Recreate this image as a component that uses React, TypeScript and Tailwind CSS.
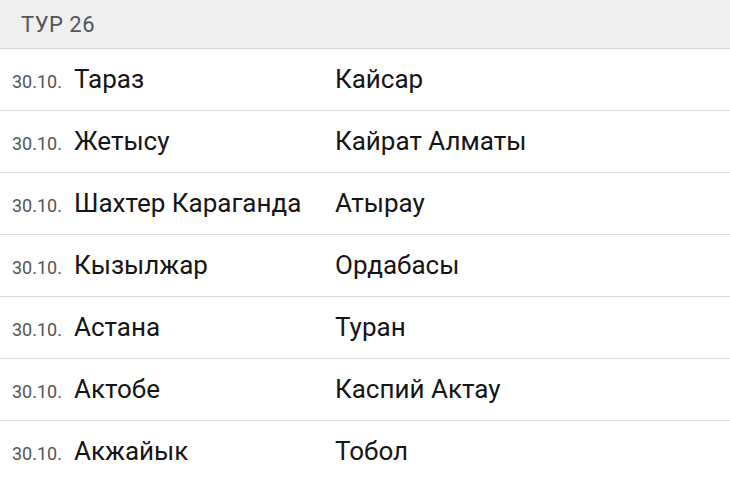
const MATCHES = [
  { date: "30.10.", home: "Тараз", away: "Кайсар" },
  { date: "30.10.", home: "Жетысу", away: "Кайрат Алматы" },
  { date: "30.10.", home: "Шахтер Караганда", away: "Атырау" },
  { date: "30.10.", home: "Кызылжар", away: "Ордабасы" },
  { date: "30.10.", home: "Астана", away: "Туран" },
  { date: "30.10.", home: "Актобе", away: "Каспий Актау" },
  { date: "30.10.", home: "Акжайык", away: "Тобол" },
];

export default function App() {
  return (
    <div className="w-[730px] h-[480px] overflow-hidden bg-white font-['Roboto',sans-serif]">
      <div className="h-[49px] bg-[#efefef] border-b border-[#d6d6d6] flex items-center pl-[21px]">
        <span className="text-[22px] text-[#555] tracking-[0.5px]">ТУР 26</span>
      </div>
      <ul>
        {MATCHES.map((m, i) => (
          <li
            key={i}
            className="h-[62px] border-b border-[#dcdcdc] flex items-center"
          >
            <span className="w-[74px] pl-[12px] text-[18px] text-[#555] pt-[3px]">{m.date}</span>
            <span className="w-[261px] text-[26px] text-[#151515]">{m.home}</span>
            <span className="text-[26px] text-[#151515]">{m.away}</span>
          </li>
        ))}
      </ul>
    </div>
  );
}
